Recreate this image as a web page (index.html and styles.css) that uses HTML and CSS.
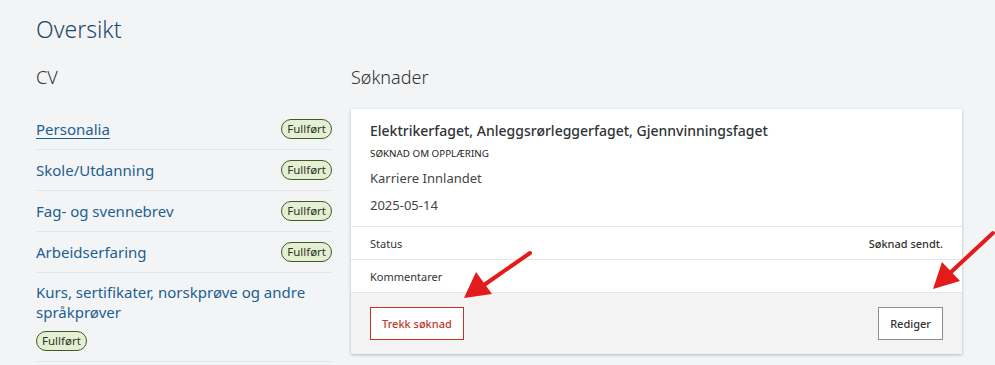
FILE: index.html
```html
<!DOCTYPE html>
<html lang="no">
<head>
    <meta charset="UTF-8">
    <meta name="viewport" content="width=device-width, initial-scale=1.0">
    <title>Oversikt</title>
    <link rel="stylesheet" href="styles.css">
</head>
<body>
    <div class="page">
        <main class="main">
            <h1>Oversikt</h1>
            <div class="columns">
                <!-- CV -->
                <section class="cv">
                    <h2>CV</h2>
                    <ul class="cv-list">
                        <li class="cv-row">
                            <a href="#" class="cv-link active">Personalia</a>
                            <span class="badge">Fullført</span>
                        </li>
                        <li class="cv-row">
                            <a href="#" class="cv-link">Skole/Utdanning</a>
                            <span class="badge">Fullført</span>
                        </li>
                        <li class="cv-row">
                            <a href="#" class="cv-link">Fag- og svennebrev</a>
                            <span class="badge">Fullført</span>
                        </li>
                        <li class="cv-row">
                            <a href="#" class="cv-link">Arbeidserfaring</a>
                            <span class="badge">Fullført</span>
                        </li>
                        <li class="cv-row stacked">
                            <a href="#" class="cv-link">Kurs, sertifikater, norskprøve og andre språkprøver</a>
                            <span class="badge">Fullført</span>
                        </li>
                    </ul>
                </section>

                <!-- Søknader -->
                <section class="applications">
                    <h2>Søknader</h2>
                    <div class="card">
                        <div class="card-body">
                            <h3>Elektrikerfaget, Anleggsrørleggerfaget, Gjennvinningsfaget</h3>
                            <div class="kind">Søknad om opplæring</div>
                            <p>Karriere Innlandet</p>
                            <p>2025-05-14</p>
                        </div>
                        <div class="card-row">
                            <span>Status</span>
                            <span class="status">Søknad sendt.</span>
                        </div>
                        <div class="card-row">
                            <span>Kommentarer</span>
                        </div>
                        <div class="card-footer">
                            <button class="btn btn-danger">Trekk søknad</button>
                            <button class="btn">Rediger</button>
                        </div>
                    </div>
                </section>
            </div>
        </main>
        <div class="scroll-track"></div>
    </div>

    <!-- annotation arrows -->
    <svg class="arrows" width="995" height="365" viewBox="0 0 995 365">
        <g fill="#e31b1b" stroke="#e31b1b">
            <line x1="530" y1="253" x2="484" y2="285" stroke-width="4" stroke-linecap="round"/>
            <polygon points="464,298 476,272 492,294" stroke="none"/>
            <line x1="993" y1="233" x2="950" y2="273" stroke-width="4" stroke-linecap="round"/>
            <polygon points="933,289 942,262 960,281" stroke="none"/>
        </g>
    </svg>
</body>
</html>
```

FILE: styles.css
```css
/* General Styling */
body {
    font-family: "Noto Sans", "Open Sans", sans-serif;
    margin: 0;
    padding: 0;
    background-color: #f3f4f6;
    color: #333;
}
.page {
    display: flex;
    height: 365px;
    overflow: hidden;
}
.main {
    width: 946px;
    padding: 0 36px;
}
.scroll-track {
    flex: 1;
    background: #f8f8f9;
}
h1 {
    font-size: 23px;
    font-weight: 300;
    color: #1b4a6b;
    margin: 14px 0 0;
    line-height: 30px;
}
h2 {
    font-size: 18px;
    font-weight: 300;
    color: #333;
    margin: 21px 0 20px;
    line-height: 24px;
}
.columns {
    display: flex;
    gap: 19px;
}

/* CV list */
.cv {
    width: 296px;
}
.cv-list {
    list-style: none;
    margin: 0;
    padding: 0;
}
.cv-row {
    display: flex;
    justify-content: space-between;
    align-items: center;
    height: 40px;
    border-bottom: 1px solid #e4e5e8;
}
.cv-row.stacked {
    flex-direction: column;
    align-items: flex-start;
    height: auto;
    padding: 9px 0 10px;
}
.cv-row.stacked .badge {
    margin-top: 9px;
}
.cv-link {
    font-size: 15px;
    color: #1d5f91;
    text-decoration: none;
    line-height: 20px;
}
.cv-link.active {
    text-decoration: underline;
    text-underline-offset: 3px;
}
.badge {
    font-size: 11.5px;
    color: #2c3a16;
    background: #e4efd6;
    border: 1px solid #3f5d1c;
    border-radius: 10px;
    padding: 1px 5px;
    line-height: 16px;
}

/* Application card */
.applications {
    width: 611px;
}
.card {
    background: white;
    box-shadow: 0 1px 3px rgba(0, 0, 0, 0.25);
}
.card-body {
    padding: 12px 19px 11px;
    border-bottom: 1px solid #e6e6e6;
}
.card-body h3 {
    font-size: 14px;
    font-weight: 500;
    color: #2f3337;
    margin: 0 0 6px;
    line-height: 20px;
}
.kind {
    font-size: 9.8px;
    text-transform: uppercase;
    color: #222;
    margin-bottom: 7px;
    line-height: 14px;
}
.card-body p {
    font-size: 13px;
    color: #444;
    margin: 0 0 7px;
    line-height: 20px;
}
.card-body p:last-child {
    margin-bottom: 0;
}
.card-row {
    display: flex;
    justify-content: space-between;
    align-items: center;
    height: 32px;
    padding: 0 19px;
    font-size: 11px;
    color: #333;
    border-bottom: 1px solid #e6e6e6;
}
.status {
    font-weight: 500;
}
.card-footer {
    display: flex;
    justify-content: space-between;
    background: #f3f3f3;
    padding: 14px 19px;
}
.btn {
    font-family: inherit;
    font-size: 11px;
    font-weight: 500;
    background: white;
    color: #333;
    border: 1px solid #8a8f94;
    padding: 0 11px;
    height: 33px;
    cursor: pointer;
}
.btn-danger {
    color: #c0392b;
    border-color: #c4331f;
}

.arrows {
    position: absolute;
    top: 0;
    left: 0;
    pointer-events: none;
}
```
